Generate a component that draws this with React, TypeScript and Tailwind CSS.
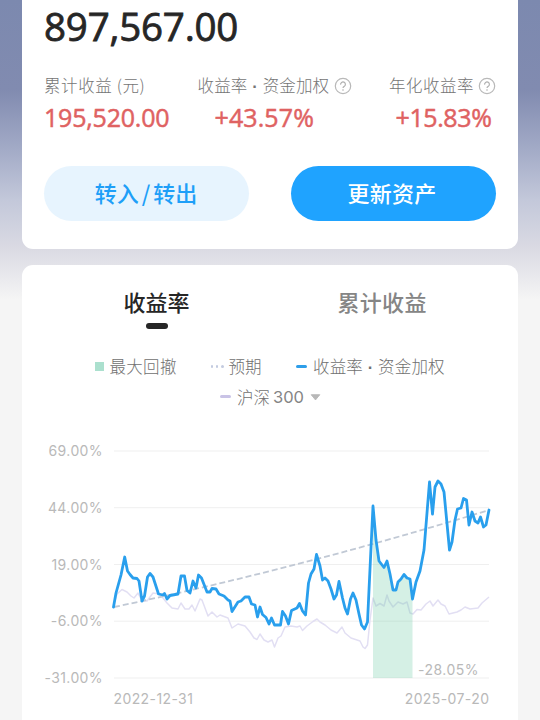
const YIELD_POINTS =
  '113.5,607 116,593 121,575 124.7,557 127.5,571 130,574.5 133,578 137,578.5 139,581 142,601 144.5,596 147.5,577 150,573.5 153,577 158.5,594 163,595 164.5,593.5 167,599 170,595.5 178,594 181,576 184.5,576 187,590.5 190,593 193,581 196,588 198.5,575 201.5,578 207,592 210,592 212,588.5 216,589 219,594 224,596 228,600 230,601 232,611.5 238,602 241,601 245,597 249,597 251.5,604 255,605 257.5,617 260,607 262.5,614.5 266,617.5 269,624 271.5,618 274.5,625 280.5,625 282.5,611.5 285.5,616 288.5,624 291.5,610.5 297,608 299.5,603.5 302.5,611 305.5,615 308.5,583 311,574 314,569 316.5,554.5 320,566 322.5,580 325,578 328,581 331,589 334,599 336.5,595 339,581.5 342.5,598 345,608 347.5,614 350.5,599 353,593 356,600 359,614 361.5,625 364.5,629 367.5,622 369,590 373,506 376,540 379,561 384,567.5 387,561 390,574 393,590 396,590 398,582 401,579 404,574.5 407,578 410,579 412.5,599 416,582 420,571 424,550 429.5,482 432.5,514 435,487 438,481 441,484 444,492 449.5,550 452,542 455,520 457.5,509 461,508 463.5,498.5 466.5,500 469,525 472,512 475,521 478,523 480.5,517 483.5,527 486,525 489,510';

const INDEX_POINTS =
  '113.5,605 117,594 122,589.5 127,592 131,596 134,598 138,593 142,601 147,601 150,597 153,593 159,594 163,598 167,603 172,608 178,609 181,603 185,609 189,609 192,605 195,611 200,599 202,600 208,616 212,612 217,617 220,615 228,618 232,628 238,624 245,626 250,632 254,638 257,639.5 260,634 264,640 268,642 272,640 274.5,647 278,638 281,636 285,627 291,626 297,627 300,626 302.5,630.5 307,626 313,621.5 317,619 320,622 325,625 331,630 337,633 342,627 345,633 351,638 357,640 360,641 363,647 365,648.5 367.5,645 370,620 373,598 376,606 380,603.5 384,606 387,595 389,601 393,607 398,602 403,604 407,602 410,613 413,614 417,609.5 421,610 426,604 430,601 433,606 438,600 441,604 445,606 449,614 457,612 461,610 465,607 470,609 478,608 482,603 489,597';

const DRAWDOWN_POINTS =
  '373,506 376,540 379,561 384,567.5 387,561 390,574 393,590 396,590 398,582 401,579 404,574.5 407,578 410,579 412.5,599 412.5,678 373,678';

const TICKS = [
  { y: 451, label: '69.00%' },
  { y: 507.7, label: '44.00%' },
  { y: 564.5, label: '19.00%' },
  { y: 621.2, label: '-6.00%' },
  { y: 678, label: '-31.00%' },
];

function HelpIcon() {
  return (
    <svg viewBox="0 0 18 18" className="size-[18px] shrink-0" fill="none">
      <circle cx="9" cy="9" r="7.7" stroke="#b9b9b9" strokeWidth="1.2" />
      <path d="M6.6 7.6a2.4 2.4 0 1 1 3.8 1.7C9.5 9.9 9 10.2 9 11.1" stroke="#b0b0b0" strokeWidth="1.2" />
      <circle cx="9" cy="13" r=".8" fill="#b0b0b0" />
    </svg>
  );
}

function WeightedLabel() {
  return (
    <span className="whitespace-nowrap tracking-[0.15px]">
      收益率<span className="font-['Liberation_Sans',sans-serif] font-bold"> · </span>资金加权
    </span>
  );
}

function Summary() {
  return (
    <section className="h-[249px] rounded-b-[11px] bg-white px-[22px]">
      <div className="h-[54px] font-['Open_Sans','Liberation_Sans',sans-serif] text-[38.5px] leading-[53px] font-medium tracking-[-0.2px] text-[#262626] [-webkit-text-stroke:0.8px_#262626]">
        897,567.00
      </div>
      <div className="mt-[19px] flex h-[25px] items-center text-[16.5px] leading-[25px] font-light whitespace-nowrap text-[#757575]">
        <span className="w-[154px] tracking-[0.6px]">累计收益 (元)</span>
        <div className="flex w-[192px] items-center gap-[5px]">
          <WeightedLabel />
          <HelpIcon />
        </div>
        <div className="flex items-center gap-1">
          <span className="tracking-[0.5px]">年化收益率</span>
          <HelpIcon />
        </div>
      </div>
      <div className="mt-1 flex h-[32px] font-['Open_Sans','Liberation_Sans',sans-serif] text-[25px] leading-[31px] font-medium tracking-[-0.2px] text-[#df6262] [-webkit-text-stroke:0.5px_#df6262]">
        <span className="w-[170.5px]">195,520.00</span>
        <span className="w-[181px] tracking-[0.1px]">+43.57%</span>
        <span className="tracking-[-0.4px]">+15.83%</span>
      </div>
      <div className="mt-[32px] flex justify-between text-[22px] font-medium">
        <button className="h-[55px] w-[205px] rounded-full bg-[#e7f4fe] pr-[1px] pb-[3px] text-[#1e9ff8]">转入<span className="mx-[3px]">/</span>转出</button>
        <button className="h-[55px] w-[205px] rounded-full bg-[#1fa3ff] pr-[3px] pb-[3px] tracking-[0.2px] text-white">更新资产</button>
      </div>
    </section>
  );
}

function Tabs() {
  return (
    <div className="flex h-[65px] pt-[19px] text-[22px] leading-[34px] font-medium">
      <div className="flex w-[270px] flex-col items-center text-[#262626]">
        <span className="mr-px">收益率</span>
        <span className="mt-[5px] h-[6px] w-[22px] rounded-full bg-[#262626]" />
      </div>
      <span className="ml-[45.5px] tracking-[0.3px] text-[#858585]">累计收益</span>
    </div>
  );
}

function Legend() {
  return (
    <div className="flex flex-col pt-[21px] text-[16.5px] leading-[30.5px] font-light text-[#707070]">
      <div className="flex h-[30.5px] items-center pl-[73px]">
        <span className="mr-[6px] size-[8.5px] bg-[#abe0ce]" />
        <span className="w-[101px] tracking-[0.3px]">最大回撤</span>
        <span className="mr-[5px] flex w-[13px] justify-between">
          <i className="h-[2.5px] w-[2.5px] rounded-full bg-[#c3cbe0]" />
          <i className="h-[2.5px] w-[2.5px] rounded-full bg-[#c3cbe0]" />
          <i className="h-[2.5px] w-[2.5px] rounded-full bg-[#c3cbe0]" />
        </span>
        <span className="w-[67.5px]">预期</span>
        <span className="mr-[6px] h-[3px] w-[11px] rounded-full bg-[#2e9ee9]" />
        <WeightedLabel />
      </div>
      <div className="flex h-[30.5px] items-center pl-[198px]">
        <span className="mr-[6px] h-[3px] w-[11px] rounded-full bg-[#c9c3e6]" />
        <span>沪深</span>
        <span className="ml-[3px] font-['Inter',sans-serif] text-[16.5px] font-normal text-[#858585]">300</span>
        <svg viewBox="0 0 12 8" className="ml-[6px] h-[8px] w-[11px]">
          <path d="M1.3 1.5h9.4L6 7.2Z" fill="#b8b8b8" stroke="#b8b8b8" strokeLinejoin="round" />
        </svg>
      </div>
    </div>
  );
}

function Chart() {
  return (
    <svg viewBox="22 412 496 308" className="block h-[308px] w-[496px] font-['Inter',sans-serif]" fill="none">
      {TICKS.map((tick) => (
        <g key={tick.label}>
          <line x1="114" x2="489" y1={tick.y} y2={tick.y} stroke="#efefef" />
          <text x="103" y={tick.y + 5.2} textAnchor="end" fontSize="14" letterSpacing="0.4" fill="#b9b9b9">
            {tick.label}
          </text>
        </g>
      ))}
      <polyline points={INDEX_POINTS} stroke="#e2dff3" strokeWidth="1.5" strokeLinejoin="round" />
      <path d="M114 607Q300 568 489 510" stroke="#c1c9d5" strokeWidth="1.8" strokeDasharray="6 3" />
      <polygon points={DRAWDOWN_POINTS} fill="#6ecaa6" fillOpacity="0.29" />
      <polyline points={YIELD_POINTS} stroke="#299fed" strokeWidth="2.8" strokeLinejoin="round" strokeLinecap="round" />
      <text x="418" y="674.5" fontSize="14" letterSpacing="0.5" fill="#b9b9b9">-28.05%</text>
      <text x="113.5" y="704" fontSize="14" letterSpacing="0.4" fill="#b9b9b9">2022-12-31</text>
      <text x="489.4" y="704" textAnchor="end" fontSize="14" letterSpacing="0.4" fill="#b9b9b9">2025-07-20</text>
    </svg>
  );
}

export default function App() {
  return (
    <main className="flex h-[720px] w-[540px] flex-col gap-4 overflow-hidden bg-[#f5f5f5] bg-[linear-gradient(#7c89af_0px,#818bb0_90px,#a3abc7_150px,#c3c8da_200px,#dadae3_248px,#f5f5f5_300px)] px-[22px] font-['Noto_Sans_CJK_SC',sans-serif]">
      <Summary />
      <section className="h-[455px] rounded-t-[11px] bg-white">
        <Tabs />
        <Legend />
        <Chart />
      </section>
    </main>
  );
}
